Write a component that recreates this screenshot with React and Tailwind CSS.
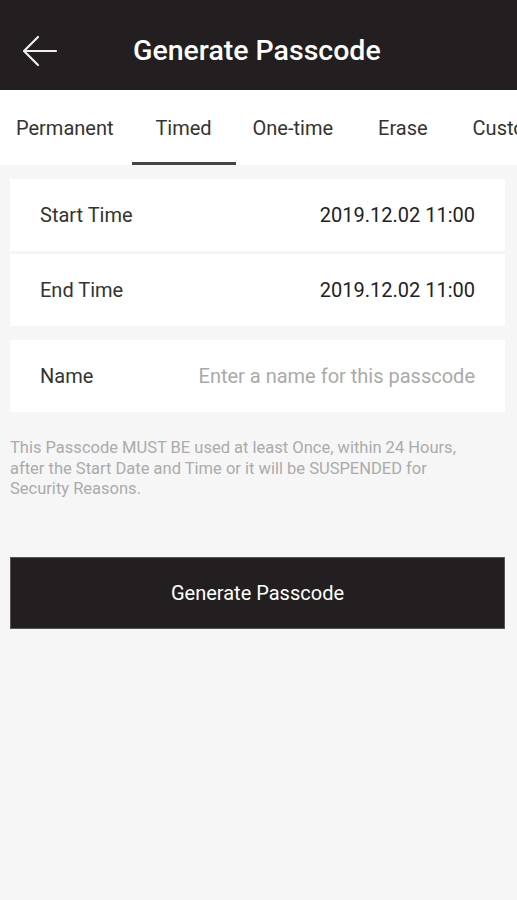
import { useState } from "react";

const TABS = ["Permanent", "Timed", "One-time", "Erase", "Custom"];

function Row({ label, children, className = "" }) {
  return (
    <div className={`flex h-[72px] items-center justify-between bg-white px-[30px] text-[20px] ${className}`}>
      <span className="text-[#333]">{label}</span>
      {children}
    </div>
  );
}

export default function App() {
  const [tab] = useState("Timed");

  return (
    <div className="min-h-[900px] bg-[#f6f6f6] font-['Roboto',sans-serif]">
      <header className="flex h-[90px] items-center bg-[#231f20] pt-[12px] text-white">
        <button className="ml-[20px] flex h-[40px] w-[40px] items-center justify-center">
          <svg width="36" height="32" viewBox="0 0 36 32" fill="none" stroke="#eee" strokeWidth="2.2" strokeLinecap="round" strokeLinejoin="round">
            <path d="M34 16H3" />
            <path d="M16 2L2 16l14 14" />
          </svg>
        </button>
        <h1 className="ml-[73px] text-[28.5px] font-medium">Generate Passcode</h1>
      </header>

      <nav className="flex h-[75px] items-stretch overflow-hidden whitespace-nowrap bg-white text-[20px] text-[#333]">
        {TABS.map((t, i) => (
          <div
            key={t}
            className={`flex shrink-0 items-center ${
              ["pl-[16px] pr-[18px]", "w-[104px] justify-center", "pl-[17px] pr-[45px]", "pr-[45px]", ""][i]
            } ${t === tab ? "border-b-[3px] border-[#444] pt-[3px]" : ""}`}
          >
            {t}
          </div>
        ))}
      </nav>

      <div className="pl-[10px] pr-[12px] pt-[14px]">
        <Row label="Start Time">
          <span className="text-[#222]">2019.12.02 11:00</span>
        </Row>
        <Row label="End Time" className="mt-[3px]">
          <span className="text-[#222]">2019.12.02 11:00</span>
        </Row>
        <Row label="Name" className="mt-[14px]">
          <input
            placeholder="Enter a name for this passcode"
            className="w-[300px] bg-transparent text-right text-[20px] outline-none placeholder:text-[#aaa]"
          />
        </Row>

        <p className="mt-[26px] pr-[18px] text-[16.5px] leading-[20.5px] text-[#ababab]">
          This Passcode MUST BE used at least Once, within 24 Hours, after the Start Date and Time or it will be SUSPENDED for Security Reasons.
        </p>

        <button className="mt-[57px] flex h-[72px] w-full items-center justify-center border border-[#555] bg-[#231f20] text-[20px] text-white">
          Generate Passcode
        </button>
      </div>
    </div>
  );
}
